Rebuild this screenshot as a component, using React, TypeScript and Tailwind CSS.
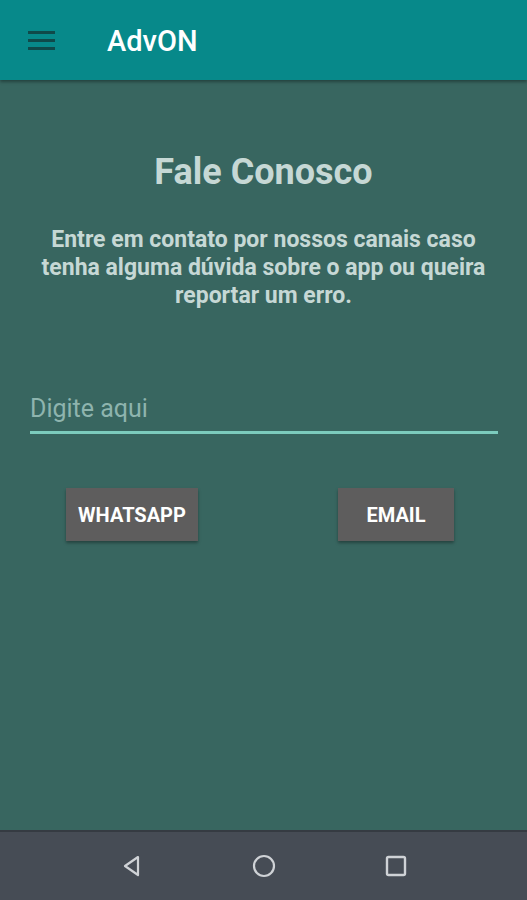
import React from "react";

export default function App() {
  return (
    <div className="w-[527px] h-[900px] flex flex-col bg-[#386660]" style={{ fontFamily: "Roboto, 'Noto Sans', sans-serif" }}>
      <header className="h-[80px] shrink-0 bg-[#07898a] flex items-center shadow-[0_2px_3px_rgba(0,0,0,0.35)] relative z-10">
        <div className="ml-[28px] w-[27px] flex flex-col gap-[5px]">
          <div className="h-[3px] bg-[#0f4a4a]" />
          <div className="h-[3px] bg-[#0f4a4a]" />
          <div className="h-[3px] bg-[#0f4a4a]" />
        </div>
        <div className="ml-[52px] pt-[3px] text-white text-[29px] font-medium">AdvON</div>
      </header>
      <main className="flex-1 flex flex-col items-center">
        <h1 className="mt-[70px] text-[36px] leading-[44px] font-bold text-[#c6d8d5]">Fale Conosco</h1>
        <p className="mt-[32px] w-[462px] text-center text-[23px] leading-[28px] font-bold text-[#c6d8d5]">
          Entre em contato por nossos canais caso tenha alguma dúvida sobre o app ou queira reportar um erro.
        </p>
        <div className="mt-[83px] w-[468px] self-start ml-[30px]">
          <div className="text-[25px] leading-[32px] text-[#8eb4ae]">Digite aqui</div>
          <div className="mt-[6px] h-[3px] bg-[#7ccbbd]" />
        </div>
        <div className="mt-[54px] w-full flex">
          <button className="ml-[66px] w-[132px] h-[53px] bg-[#5e5d5d] text-white text-[20px] font-bold shadow-[0_2px_3px_rgba(0,0,0,0.35)]">WHATSAPP</button>
          <button className="ml-[140px] w-[116px] h-[53px] bg-[#5e5d5d] text-white text-[20px] font-bold shadow-[0_2px_3px_rgba(0,0,0,0.35)]">EMAIL</button>
        </div>
      </main>
      <nav className="h-[70px] shrink-0 bg-[#464c55] border-t-[2px] border-[#353b42] flex items-center justify-center gap-[104px]">
        <svg width="28" height="28" viewBox="0 0 28 28" fill="none" stroke="#cfd2d6" strokeWidth="2.2" strokeLinejoin="round">
          <path d="M20 5 L7 14 L20 23 Z" />
        </svg>
        <svg width="28" height="28" viewBox="0 0 28 28" fill="none" stroke="#cfd2d6" strokeWidth="2.2">
          <circle cx="14" cy="14" r="10" />
        </svg>
        <svg width="28" height="28" viewBox="0 0 28 28" fill="none" stroke="#cfd2d6" strokeWidth="2.4" strokeLinejoin="round">
          <rect x="5" y="5" width="18" height="18" rx="1.5" />
        </svg>
      </nav>
    </div>
  );
}
